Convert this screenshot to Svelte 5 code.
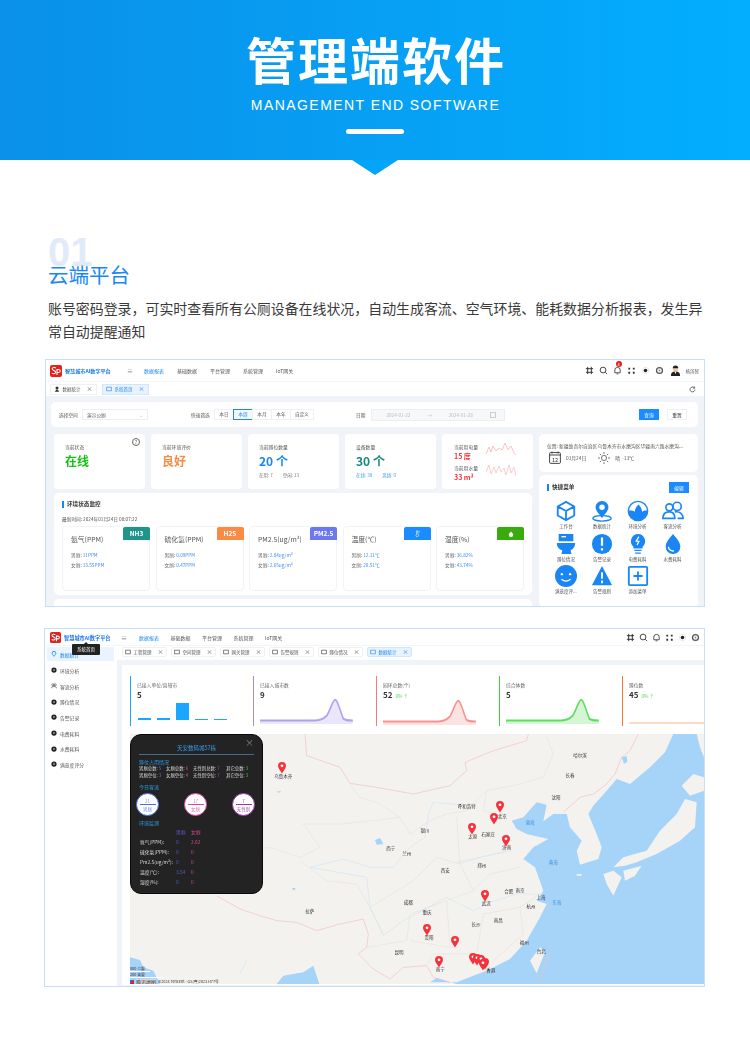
<script>
  const menu = ['数据报表', '基础数据', '平台管理', '系统管理', 'IoT网关'];
  const topCards = [
    { t: '当前状态', v: '在线', c: '#12c312', help: true },
    { t: '当前环境评价', v: '良好', c: '#f98b45' },
    { t: '当前蹲位数量', v: '20 个', c: '#1a86f5', s: ['在用: 7', '空闲: 13'] },
    { t: '设备数量', v: '30 个', c: '#15897c', s: ['在线: 30', '离线: 0'], blue: true }
  ];
  const sensors = [
    { n: '氨气(PPM)', b: 'NH3', c: '#1f9488', m: '11PPM', f: '13.55PPM' },
    { n: '硫化氢(PPM)', b: 'H2S', c: '#f98b45', m: '0.09PPM', f: '0.47PPM' },
    { n: 'PM2.5(ug/m³)', b: 'PM2.5', c: '#6b78f0', m: '2.84ug/m³', f: '2.65ug/m³' },
    { n: '温度(℃)', b: '', c: '#1a8cff', m: '12.11℃', f: '20.51℃', icon: 'temp' },
    { n: '湿度(%)', b: '', c: '#3aab0e', m: '36.82%', f: '43.74%', icon: 'drop' }
  ];
  const quick = ['工作台', '数据统计', '环境分析', '客流分析', '蹲位情况', '告警记录', '电费耗料', '水费耗料', '满意度评...', '告警规则', '添加菜单'];
  const side = ['数据统计', '环境分析', '客流分析', '蹲位情况', '告警记录', '电费耗料', '水费耗料', '满意度评分'];
  const tabs2 = ['工程管理', '空间管理', '网关管理', '告警规则', '蹲位情况', '数据统计'];
  const bell = 'M0 26 H88 C104 26 108 24 114 20 C122 10 124 2 128 2 C132 2 136 14 142 24 C146 26 150 26 158 26';
  const stats = [
    { t: '已接入单位/直辖市', v: '5', c: '#1aa7ff', bars: true },
    { t: '已接入城市数', v: '9', c: '#a08cf0' },
    { t: '园环总数(个)', v: '52', c: '#f77b7b', up: true },
    { t: '综合体数', v: '5', c: '#3cd63c' },
    { t: '蹲位数', v: '45', c: '#f9782c', up: true, last: true }
  ];
  const barHeights = [2, 2, 17, 1, 1];
  const occupy = [
    ['男厕总数:', '5', '#6a6ae0'], ['女厕总数:', '6', '#d050a0'], ['无性别总数:', '7', '#a040c0'], ['其它总数:', '3', '#40c040'],
    ['男厕空位:', '3', '#6a6ae0'], ['女厕空位:', '4', '#d050a0'], ['无性别空位:', '7', '#a040c0'], ['其它空位:', '3', '#40c040']
  ];
  const flow = [
    { n: '21', l: '男厕', c: '#4a6fe0', tc: '#7a8fe8' },
    { n: '17', l: '女厕', c: '#e040a0', tc: '#e070b0' },
    { n: '7', l: '无性别', c: '#a030b0', tc: '#a050b0' }
  ];
  const envRows = [
    ['氨气(PPM):', '0', '2.62'], ['硫化氢(PPM):', '0', '0'], ['Pm2.5(ug/m³):', '0', '0'], ['温度(℃):', '3.54', '0'], ['湿度(%):', '0', '0']
  ];
  const pins = [[65, 98], [721, 215], [702, 250], [635, 280], [738, 315], [675, 482], [501, 584], [584, 618], [537, 680], [638, 670], [652, 672], [662, 675], [674, 684], [668, 688]];
  const cities = [
    ['乌鲁木齐', 70, 127], ['北京', 727, 245], ['太原', 638, 306], ['石家庄', 685, 300], ['济南', 740, 340], ['武汉', 679, 506], ['贵阳', 507, 610], ['南宁', 541, 705], ['香港', 692, 707],
    ['呼和浩特', 620, 217], ['哈尔滨', 960, 62], ['长春', 930, 122], ['沈阳', 888, 188], ['银川', 495, 287], ['西宁', 392, 342], ['兰州', 440, 356], ['西安', 556, 407], ['郑州', 665, 393],
    ['合肥', 746, 472], ['南京', 780, 467], ['上海', 843, 490], ['杭州', 813, 515], ['成都', 445, 505], ['重庆', 501, 535], ['拉萨', 149, 531], ['长沙', 648, 569], ['南昌', 715, 557], ['福州', 793, 625], ['台北', 844, 651], ['昆明', 417, 655]
  ];
  const seas = [['渤海', 810, 265], ['黄海', 880, 385], ['东海', 890, 505]];
</script>

{#snippet logo()}
  <svg class="logo" viewBox="0 0 12 12"><rect width="12" height="12" rx="2" fill="#e3201b" /><path d="M5.8 3.2C4.6 1.8 2 2.3 2.2 4c.2 1.6 3.6 1.5 3.5 3.3C5.6 9 3 9.300 1.900 8" fill="none" stroke="#fff" stroke-width="1.100" /><path d="M7 10V4.500h1.600c2.200 0 2.200 3-.1 3H7" fill="none" stroke="#fff" stroke-width="1.100" /></svg>
{/snippet}

{#snippet tools()}
  <svg viewBox="0 0 10 10"><path d="M3 1v8M7 1v8M1 3h8M1 7h8" stroke="#333" fill="none" stroke-width="1.100" /></svg>
  <svg viewBox="0 0 10 10"><circle cx="4.500" cy="4.500" r="3.200" stroke="#333" fill="none" stroke-width="1" /><path d="M7 7l2 2" stroke="#333" /></svg>
  <svg viewBox="0 0 10 10"><path d="M2 7.500V4.500a3 3 0 0 1 6 0v3zM4 8.700h2" stroke="#444" fill="none" stroke-width="1" /></svg>
  <svg viewBox="0 0 10 10"><path d="M1.500 2h2v2h-2zM6.500 2h2v2h-2zM1.500 6.500h2v2h-2zM6.500 6.500h2v2h-2z" fill="#333" /></svg>
  <svg viewBox="0 0 10 10"><circle cx="5" cy="5" r="2" fill="#222" /><circle cx="5" cy="5" r="3.500" fill="none" stroke="#999" stroke-width=".5" stroke-dasharray="1 1" /></svg>
  <svg viewBox="0 0 10 10"><circle cx="5" cy="5" r="3.300" fill="none" stroke="#555" stroke-width="1.400" /><circle cx="5" cy="5" r="1" fill="#888" /></svg>
{/snippet}

{#snippet spark(color, w, h)}
  <svg class="spark" width={w} height={h} viewBox="0 0 160 30" preserveAspectRatio="none">
    <path d={bell + ' V30 H0 Z'} fill={color} opacity=".22" />
    <path d={bell} fill="none" stroke={color} stroke-width="2.500" opacity=".8" />
  </svg>
{/snippet}

<main class="page">
  <header class="hero">
    <h1>管理端软件</h1>
    <p class="en">MANAGEMENT END SOFTWARE</p>
    <i class="rule"></i>
  </header>

  <section class="intro">
    <div class="heading">
      <span class="num">01</span>
      <h2>云端平台</h2>
    </div>
    <p class="desc">账号密码登录，可实时查看所有公厕设备在线状况，自动生成客流、空气环境、能耗数据分析报表，发生异常自动提醒通知</p>
  </section>

  <!-- Screenshot 1 -->
  <section class="shot shot1">
    <div class="topbar">
      {@render logo()}
      <b class="brand">智慧城市AI数字平台</b>
      <span class="burger">≡</span>
      <nav class="menu">
        {#each menu as m, i}<span class:on={i === 0}>{m}</span>{/each}
      </nav>
      <div class="tools">
        {@render tools()}
        <span class="badge">4</span>
        <svg class="avatar" viewBox="0 0 12 12"><circle cx="6" cy="4" r="3" fill="#f0c8a8" /><path d="M3 3.500a3 3 0 0 1 6 0z" fill="#222" /><path d="M1 12c0-4 2-5 5-5s5 1 5 5z" fill="#222" /><path d="M5 7h2l-1 3z" fill="#fff" /></svg>
        <span class="uname">杨滨智</span>
      </div>
    </div>
    <div class="tabrow">
      <span class="tab"><svg viewBox="0 0 8 8"><circle cx="4" cy="2.500" r="2" fill="#333" /><path d="M1 7.500h6L5 5H3z" fill="#333" /></svg>数据统计<em>×</em></span>
      <span class="tab act"><svg viewBox="0 0 8 8"><rect x="1" y="1.500" width="6" height="5" fill="none" stroke="#1a86f5" stroke-width=".8" /></svg>系统首页<em>×</em></span>
      <svg class="refresh" viewBox="0 0 10 10"><path d="M8.500 5a3.500 3.500 0 1 1-1-2.500M8 .8v2.200H5.800" fill="none" stroke="#333" stroke-width="1" /></svg>
    </div>
    <div class="content">
      <div class="filter">
        <span class="lbl">选择空间</span>
        <span class="select">演示公厕<i>⌄</i></span>
        <span class="lbl l2">快速筛选</span>
        <span class="seg"><span>本日</span><span class="cur">本周</span><span>本月</span><span>本年</span><span class="w">自定义</span></span>
        <span class="lbl l3">日期</span>
        <span class="range"><span>2024-01-22</span><span>→</span><span>2024-01-28</span><i></i></span>
        <span class="btn pri">查询</span>
        <span class="btn">重置</span>
      </div>
      <div class="columns">
        <div class="leftcol">
          <div class="cards">
            {#each topCards as c}
              <div class="card">
                <span class="ct">{c.t}</span>
                <strong style="color:{c.c}">{c.v}</strong>
                {#if c.s}<span class="sub" class:blue={c.blue}><span>{c.s[0]}</span><span>{c.s[1]}</span></span>{/if}
                {#if c.help}<span class="help">?</span>{/if}
              </div>
            {/each}
            <div class="card energy">
              <div class="en-txt">
                <span class="ct">当前用电量</span><b>15 度</b>
                <span class="ct">当前用水量</span><b>33 m³</b>
              </div>
              <div class="waves">
                <svg viewBox="0 0 30 14" width="30" height="14"><path d="M0 12L3 5 5 10 7 4 10 9 13 6 16 8 19 1 22 8 25 4 28 11 30 13" fill="none" stroke="#f9a8a8" stroke-width=".7" /></svg>
                <svg viewBox="0 0 30 14" width="30" height="14"><path d="M0 9L3 2 5 11 8 4 10 10 13 3 15 9 18 5 20 12 23 2 25 10 28 4 30 13" fill="none" stroke="#f9b8b8" stroke-width=".7" /></svg>
              </div>
            </div>
          </div>
          <div class="env">
            <h3>环境状态监控</h3>
            <p class="upd">最新时间: 2024年01月24日 08:07:22</p>
            <div class="sensors">
              {#each sensors as s}
                <div class="sensor">
                  <span class="tag" style="background:{s.c}">
                    {#if s.icon === 'temp'}
                      <svg viewBox="0 0 8 8" width="7" height="7"><path d="M3 1v4a1.500 1.500 0 1 0 1.500 0V1zM5.500 2h1.500" fill="none" stroke="#fff" stroke-width=".7" /></svg>
                    {:else if s.icon === 'drop'}
                      <svg viewBox="0 0 8 8" width="6" height="6"><path d="M4 .5C5.500 2.500 7 3.500 7 5a3 3 0 0 1-6 0c0-1.500 1.500-2.500 3-4.500z" fill="#fff" /></svg>
                    {:else}{s.b}{/if}
                  </span>
                  <div class="sn">{s.n}</div>
                  <div class="sv">男厕: <span>{s.m}</span></div>
                  <div class="sv">女厕: <span>{s.f}</span></div>
                </div>
              {/each}
            </div>
          </div>
          <div class="stub"></div>
        </div>
        <div class="rightcol">
          <div class="info">
            <p>位置: 新疆维吾尔自治区乌鲁木齐市水磨沟区华疆南六路水磨沟...</p>
            <div class="wx">
              <svg width="12" height="13" viewBox="0 0 12 13"><rect x=".6" y="1.600" width="10.800" height="10.800" rx="1" fill="none" stroke="#333" stroke-width=".9" /><path d="M.6 4h10.800M3 .5v2M9 .5v2" stroke="#333" stroke-width=".9" /><text x="6" y="10.500" font-size="5.500" text-anchor="middle" fill="#333">12</text></svg>
              <span>01月24日</span>
              <svg class="sun" width="12" height="12" viewBox="0 0 12 12"><circle cx="6" cy="6" r="2.600" fill="none" stroke="#444" stroke-width=".7" /><path d="M6 0v2M6 10v2M0 6h2M10 6h2M1.800 1.800l1.400 1.400M8.800 8.800l1.400 1.400M1.800 10.200l1.400-1.400M8.800 3.200l1.400-1.400" stroke="#444" stroke-width=".7" /></svg>
              <span>晴&nbsp; -13℃</span>
            </div>
          </div>
          <div class="quick">
            <div class="qh"><h3>快捷菜单</h3><span class="btn pri">编辑</span></div>
            <div class="qgrid">
              {#each quick as q, i}
                <div class="qi">
                  <svg viewBox="0 0 24 24" width="22" height="22">
                    {#if i === 0}
                      <path d="M12 2l9 5v10l-9 5-9-5V7zM3 7l9 5 9-5M12 12v10" fill="none" stroke="#1a86f5" stroke-width="2" />
                    {:else if i === 1}
                      <path d="M12 1a7 7 0 0 1 7 7c0 4-4 7-7 12-3-5-7-8-7-12a7 7 0 0 1 7-7z" fill="#1a86f5" /><circle cx="12" cy="8" r="3" fill="#fff" /><ellipse cx="12" cy="20" rx="10" ry="3" fill="none" stroke="#1a86f5" stroke-width="1.500" />
                    {:else if i === 2}
                      <circle cx="12" cy="12" r="10.500" fill="none" stroke="#1a86f5" stroke-width="1.600" /><path d="M1.500 12a10.500 10.500 0 0 0 21 0c-3-1-5 0-6 1 0-3-2-6-4-8-2 2-4 5-4 8-1-1-4-2-7-1z" fill="#1a86f5" />
                    {:else if i === 3}
                      <circle cx="8" cy="8" r="3.800" fill="none" stroke="#1a86f5" stroke-width="1.800" /><circle cx="16.500" cy="7" r="4.500" fill="none" stroke="#1a86f5" stroke-width="1.800" /><path d="M1 20c0-5 3-7 7-7s6 2 6 7zM14 13c5-1 9 2 9 7h-6" fill="none" stroke="#1a86f5" stroke-width="1.800" />
                    {:else if i === 4}
                      <path d="M4 1h16v8H4zM2 11h20c0 5-3 7-5 8l1 4H7l1-4c-3-1-6-3-6-8z" fill="#1a86f5" /><path d="M7 4h5" stroke="#fff" stroke-width="1.500" />
                    {:else if i === 5}
                      <circle cx="12" cy="12" r="11" fill="#1a86f5" /><path d="M12 5v9M12 16.500v2.500" stroke="#fff" stroke-width="2.400" />
                    {:else if i === 6}
                      <path d="M12 1a8 8 0 0 1 5 14v2H7v-2A8 8 0 0 1 12 1z" fill="#1a86f5" /><path d="M13 4l-3 5h3l-2 4" fill="none" stroke="#fff" stroke-width="1.300" /><path d="M8 19h8M9 22h6" stroke="#1a86f5" stroke-width="1.500" />
                    {:else if i === 7}
                      <path d="M12 1c4 5 8 9 8 14a8 8 0 0 1-16 0c0-5 4-9 8-14z" fill="#1a86f5" /><path d="M7 15c0 3 3 5 6 4.500" fill="none" stroke="#fff" stroke-width="1.500" />
                    {:else if i === 8}
                      <circle cx="12" cy="12" r="12" fill="#1a86f5" /><circle cx="7.500" cy="10" r="1.300" fill="#fff" /><circle cx="16.500" cy="10" r="1.300" fill="#fff" /><path d="M7 15.500c3 2.500 7 2.500 10 0" fill="none" stroke="#fff" stroke-width="1.500" />
                    {:else if i === 9}
                      <path d="M12 1l11 21H1z" fill="#1a86f5" /><path d="M12 8v7M12 17v3" stroke="#fff" stroke-width="2" />
                    {:else}
                      <rect x="2" y="2" width="20" height="20" rx="1" fill="none" stroke="#1a86f5" stroke-width="2" /><path d="M12 7v10M7 12h10" stroke="#1a86f5" stroke-width="2" />
                    {/if}
                  </svg>
                  <span>{q}</span>
                </div>
              {/each}
            </div>
          </div>
        </div>
      </div>
    </div>
  </section>

  <!-- Screenshot 2 -->
  <section class="shot shot2">
    <div class="topbar t2">
      {@render logo()}
      <b class="brand">智慧城市AI数字平台</b>
      <span class="burger">≡</span>
      <nav class="menu">
        {#each menu as m, i}<span class:on={i === 0}>{m}</span>{/each}
      </nav>
      <div class="tools">{@render tools()}</div>
    </div>
    <div class="body2">
      <aside class="side">
        {#each side as s, i}
          <div class="sitem" class:on={i === 0}>
            <svg viewBox="0 0 8 8" width="6" height="6">
              {#if i === 0}<path d="M4 .5a2.500 2.500 0 0 1 2.500 2.500C6.500 4.500 5 5.500 4 7 3 5.500 1.500 4.500 1.500 3A2.500 2.500 0 0 1 4 .5z" fill="none" stroke="#1a86f5" stroke-width="1.100" />
              {:else if i === 2}<circle cx="2.500" cy="2.500" r="1.500" fill="none" stroke="#222" stroke-width=".7" /><circle cx="5.500" cy="2.500" r="1.500" fill="none" stroke="#222" stroke-width=".7" /><path d="M.5 7c0-3 7-3 7 0" fill="none" stroke="#222" stroke-width=".7" />
              {:else}<circle cx="4" cy="4" r="3.500" fill="#222" /><circle cx="4" cy="4" r="1" fill="#fff" />{/if}
            </svg>
            <span>{s}</span>
          </div>
        {/each}
        <span class="tip">系统首页</span>
      </aside>
      <div class="main2">
        <div class="tabs2">
          {#each tabs2 as t, i}
            <span class="tab" class:act={i === 5}>
              <svg viewBox="0 0 8 8"><rect x="1" y="1.500" width="6" height="5" fill="none" stroke={i === 5 ? '#1a86f5' : '#333'} stroke-width=".8" /></svg>{t}<em>×</em>
            </span>
          {/each}
        </div>
        <div class="panel">
          <div class="stats">
            {#each stats as s}
              <div class="stat" class:last={s.last} style="border-left-color:{s.c}">
                <span class="st">{s.t}</span>
                <span class="sval">{s.v}{#if s.up}<small>0% ↑</small>{/if}</span>
                {#if s.bars}
                  <div class="bars">{#each barHeights as h}<i style="height:{h}px"></i>{/each}</div>
                {:else if s.last}
                  <svg class="spark" width="82" height="26" viewBox="0 0 82 26"><path d="M0 24H78C80 24 81 22 82 19" fill="none" stroke={s.c} stroke-width="1" opacity=".55" /></svg>
                {:else}
                  {@render spark(s.c, 94, 26)}
                {/if}
              </div>
            {/each}
          </div>
          <div class="map">
            <svg class="mapsvg" viewBox="-390 0 1722 750" preserveAspectRatio="none">
              <rect x="-390" width="1722" height="750" fill="#f3f2ef" />
              <path fill="#a6d3f8" d="M1240 0L1215 55 1170 100 1110 150 1070 135 1040 170 1000 215 985 240 1010 300 1025 340 1015 375 960 392 950 350 965 320 930 280 920 240 880 240 850 262 860 212 830 205 790 250 755 260 770 285 800 300 865 315 820 340 790 375 825 400 850 470 830 500 860 510 840 550 800 620 750 675 680 710 640 725 590 745 510 745 530 732 590 750 1332 750 1332 0z" />
              <path fill="#a6d3f8" d="M50 750L70 725 130 715 160 695 178 750zM-390 670L-360 678-350 700-320 710-300 750-390 750z" />
              <path fill="#f3f2ef" d="M1310 205L1305 280 1260 320 1190 360 1130 385 1095 395 1060 400 1090 370 1160 350 1200 290 1250 240 1275 195zM1265 155L1300 120 1332 130 1332 170 1290 185zM1030 420L1060 410 1085 430 1060 485 1040 450zM1090 410L1145 395 1125 425 1095 440zM840 640L855 655 830 718 810 680zM950 420h15v5h-15zM1310 0L1320 40 1332 70 1332 0z" />
              <g fill="none" stroke="#f4bccb" stroke-width="2">
                <path d="M135 0L140 65 240 100 270 148 350 160 460 180 570 155 620 110 615 85 700 50 800 20 805 0" />
                <path d="M1135 0L1110 50 1085 70 1065 120 1040 150 1000 180 960 190 910 235" />
                <path d="M-129 486L-60 525 0 545 50 560 110 565 170 590 240 570 310 555 325 600 320 640 295 660 340 705 390 735 430 700 500 695 520 730 570 745" />
                <path d="M870 655L840 745" />
              </g>
              <g fill="none" stroke="#dfdfdb" stroke-width="1.500">
                <path d="M270 150L300 190 350 205 420 250 450 300 510 260 560 240 620 230 680 170 760 155 850 130 880 60 860 10M680 170L670 230 740 250M590 250L600 390 660 370 760 350M420 250L340 260 240 270 130 270 180 340 120 370 30 340 -100 360M120 380L200 440 290 450 330 520 370 600M330 520L460 440 530 370 600 390 640 470 690 420 780 400M640 470L560 500 450 540 440 620 320 640M560 500L570 640 450 620M670 540L650 660 520 660 500 695M670 540L780 520 840 480M780 520L790 600 700 680" />
              </g>
              <g fill="none" stroke="#c4e0f7" stroke-width="1.500">
                <path d="M600 212L520 205 505 240 495 310 450 340 400 400 330 400 250 375 150 400 320 430 330 520 370 605 430 560 560 490 640 530 690 505 770 480 850 480M590 385L660 370 740 350M-60 720L-40 680" />
              </g>
              <path fill="#a6d3f8" d="M345 318L360 312 370 330 350 332zM50 172h14l-8 5zM95 462h12l-5 8zM1085 70l15-4 2 18-10 5z" />
            </svg>
            {#each cities as c}
              <span class="city" style="left:{(c[1] + 390) / 3}px;top:{c[2] / 3}px">{c[0]}</span>
            {/each}
            {#each seas as c}
              <span class="city sea" style="left:{(c[1] + 390) / 3}px;top:{c[2] / 3}px">{c[0]}</span>
            {/each}
            {#each pins as p}
              <svg class="pin" style="left:{(p[0] + 390) / 3 - 4}px;top:{p[1] / 3 - 4.500}px" viewBox="0 0 8 12" width="8" height="12"><path d="M4 0a4 4 0 0 1 4 4C8 6.500 5.500 8.500 4 11.500 2.500 8.500 0 6.500 0 4a4 4 0 0 1 4-4z" fill="#f5323c" /><circle cx="4" cy="3.800" r="1.400" fill="#fff" /></svg>
            {/each}
            <div class="attrib"><div class="scale">800 公里</div><div class="scale s2">200 英里</div><div class="mark"><i></i><b>腾讯地图</b><span>©2024 Tencent - GS(粤)2023 H77号</span></div></div>

            <div class="popup">
              <span class="close">×</span>
              <div class="ptitle">天安数码城57栋</div>
              <div class="phead">蹲位占用情况</div>
              <div class="occ">
                {#each occupy as o}<span>{o[0]} <em style="color:{o[2]}">{o[1]}</em></span>{/each}
              </div>
              <div class="phead h2">今日客流</div>
              <div class="circles">
                {#each flow as f}
                  <div class="circle" style="border-color:{f.c}">
                    <span style="color:{f.tc}">{f.n}</span>
                    <i style="background:{f.c}"></i>
                    <span style="color:{f.tc}">{f.l}</span>
                  </div>
                {/each}
              </div>
              <div class="phead h3">环境监测</div>
              <div class="etable">
                <span></span><span class="mc">男厕</span><span class="fc">女厕</span>
                {#each envRows as r}
                  <span class="el">{r[0]}</span><span class="mc">{r[1]}</span><span class="fc">{r[2]}</span>
                {/each}
              </div>
            </div>
          </div>
        </div>
      </div>
    </div>
  </section>
</main>

<style>
  :global(body) { margin: 0; background: #fff; }
  .page { width: 750px; height: 1043px; overflow: hidden; font-family: "Noto Sans CJK SC", "Liberation Sans", sans-serif; color: #333; }
  h1, h2, h3, p { margin: 0; }
  em { font-style: normal; }
  i { display: block; }

  .hero { position: relative; height: 160px; background: linear-gradient(90deg, #0a90e8, #03aeff); color: #fff; display: flex; flex-direction: column; align-items: center; }
  .hero::after { content: ""; position: absolute; left: 352px; top: 160px; border: 23px solid transparent; border-top: 15px solid #04a4f8; border-bottom: 0; }
  .hero h1 { font-size: 50px; line-height: 60px; margin-top: 28px; font-weight: 700; letter-spacing: 2px; margin-right: -2px; }
  .en { font-family: "Liberation Sans", sans-serif; font-size: 14px; line-height: 16px; letter-spacing: 1.44px; margin-top: 9px; margin-right: -1px; }
  .rule { width: 58px; height: 5px; border-radius: 3px; background: #fff; margin-top: 16px; }

  .intro { padding: 0 47px 0 48px; }
  .heading { display: grid; margin-top: 74px; height: 50px; width: 100px; }
  .num { grid-area: 1 / 1; font-family: "Liberation Sans", sans-serif; font-size: 40px; line-height: 40px; font-weight: 700; color: #e2eafa; margin-top: -2px; }
  h2 { grid-area: 1 / 1; font-size: 20.500px; line-height: 24px; font-weight: 400; color: #1a86f5; margin-top: 28px; white-space: nowrap; }
  .desc { font-size: 13.930px; line-height: 23px; margin-top: 13px; color: #3a3a3a; }

  .shot { box-sizing: border-box; border: 1px solid #c9dff6; overflow: hidden; background: #f0f3f8; filter: blur(.35px); }
  .shot1 { width: 660px; height: 248px; margin: 16px 0 0 45px; }
  .shot2 { width: 661px; height: 359px; margin: 21px 0 0 44px; }

  .topbar { height: 21px; background: #fff; display: flex; align-items: center; padding: 0 4px; }
  .logo { width: 12px; height: 12px; flex: none; }
  .brand { font-size: 5.100px; color: #1a78e8; margin-left: 3px; white-space: nowrap; width: 51px; }
  .burger { font-size: 6px; color: #777; margin-left: 11px; width: 6px; }
  .menu { display: flex; gap: 13px; margin-left: 11px; font-size: 5px; color: #555; white-space: nowrap; }
  .menu span { width: 20px; }
  .menu .on { color: #1a86f5; }
  .tools { margin-left: auto; display: flex; align-items: center; gap: 5px; position: relative; margin-right: 1px; }
  .tools svg { width: 9px; height: 9px; flex: none; }
  .tools .avatar { width: 11px; height: 11px; margin-left: 1px; }
  .badge { position: absolute; left: 31px; top: -4px; width: 6px; height: 6px; border-radius: 50%; background: #e3201b; color: #fff; font-size: 4px; line-height: 6px; text-align: center; }
  .uname { font-size: 4.500px; color: #666; margin-left: 0; white-space: nowrap; }

  .tabrow { box-sizing: border-box; height: 15px; background: #fff; display: flex; align-items: center; gap: 5px; padding-left: 4px; border-top: 1px solid #f7f7f7; }
  .tab { box-sizing: border-box; height: 11px; width: 47px; flex: none; display: flex; align-items: center; justify-content: center; gap: 2px; border: 1px solid #eef0f3; font-size: 4.500px; color: #555; white-space: nowrap; background: #fff; }
  .tab svg { width: 6px; height: 6px; }
  .tab em { margin-left: 4px; font-size: 6px; line-height: 6px; }
  .tab.act { background: #e8f3fe; border-color: #cfe6fc; color: #1a86f5; }
  .refresh { width: 7px; height: 7px; margin-left: auto; margin-right: 8px; }

  .content { padding: 6px 6px 0 5px; }
  .filter { height: 25px; background: #fff; border-radius: 5px; display: flex; align-items: center; padding-left: 8px; font-size: 4.700px; color: #555; white-space: nowrap; margin-right: 0; }
  .lbl { width: 20px; }
  .select { box-sizing: border-box; width: 66px; height: 11px; margin-left: 3px; border: 1px solid #eceef2; display: flex; align-items: center; justify-content: space-between; padding: 0 4px; }
  .select i { font-style: normal; color: #bbb; }
  .l2 { margin-left: 43px; }
  .seg { display: flex; margin-left: 4px; }
  .seg span { box-sizing: border-box; width: 20px; height: 11px; border: 1px solid #eef0f3; margin-left: -1px; text-align: center; line-height: 9px; }
  .seg .cur { border-color: #1a86f5; color: #1a86f5; background: #f3f9ff; }
  .seg .w { width: 24px; }
  .l3 { margin-left: 42px; width: 10px; }
  .range { box-sizing: border-box; width: 134px; height: 12px; margin-left: 5px; background: #f7f8fa; border: 1px solid #eceef2; color: #bbb; display: flex; align-items: center; justify-content: space-around; padding-left: 6px; }
  .range i { width: 4px; height: 4px; border: 1px solid #ccc; }
  .btn { box-sizing: border-box; width: 20px; height: 11px; display: block; text-align: center; line-height: 10px; font-size: 4.700px; border: 1px solid #eef0f3; background: #fff; color: #333; margin-left: 8px; }
  .filter .pri { margin-left: 134px; }
  .btn.pri { background: #1a8cff; border-color: #1a8cff; color: #fff; }

  .columns { display: flex; gap: 7px; margin-top: 7px; }
  .leftcol { width: 478px; margin-left: 3px; flex: none; }
  .rightcol { width: 159px; flex: none; }
  .cards { display: grid; grid-template-columns: repeat(5, 91px); column-gap: 6px; height: 55px; }
  .card { position: relative; background: #fff; border-radius: 4px; padding: 9px 0 0 11px; display: flex; flex-direction: column; }
  .ct { font-size: 4.800px; line-height: 7px; color: #555; white-space: nowrap; }
  .card strong { font-size: 12px; line-height: 16px; margin-top: 3px; font-weight: 700; }
  .sub { font-size: 4.500px; color: #777; line-height: 7px; margin-top: 3px; display: flex; gap: 10px; }
  .sub.blue { color: #4a9cf5; }
  .help { position: absolute; right: 5px; top: 4px; box-sizing: border-box; width: 8px; height: 8px; border: 1px solid #666; border-radius: 50%; font-size: 5px; line-height: 6px; text-align: center; color: #555; }
  .energy { flex-direction: row; padding: 9px 0 0 12px; }
  .en-txt { display: flex; flex-direction: column; width: 32px; }
  .en-txt b { font-size: 7px; line-height: 10px; color: #f5323c; margin: 1px 0 3px; white-space: nowrap; }
  .waves { display: flex; flex-direction: column; gap: 7px; margin-top: -1px; }

  .env { height: 102px; margin-top: 4px; background: #fff; border-radius: 5px; padding: 8px 8px 0; box-sizing: border-box; }
  h3 { font-size: 5.600px; line-height: 7px; font-weight: 700; color: #333; border-left: 2px solid #1a86f5; padding-left: 3px; }
  .upd { font-size: 4.700px; line-height: 7px; color: #555; margin-top: 8px; }
  .sensors { display: grid; grid-template-columns: repeat(5, 88px); column-gap: 5.500px; margin-top: 3px; }
  .sensor { position: relative; box-sizing: border-box; height: 65px; border: 1px solid #f1f3f6; border-radius: 4px; padding: 7px 0 0 8px; }
  .tag { position: absolute; right: -1px; top: 0; width: 27px; height: 13px; border-radius: 2px 2px 0 0; color: #fff; font-size: 6.500px; line-height: 13px; font-weight: 700; display: flex; align-items: center; justify-content: center; }
  .sn { font-size: 6.800px; line-height: 10px; color: #555; }
  .sv { font-size: 4.700px; line-height: 9.500px; color: #666; white-space: nowrap; }
  .sn + .sv { margin-top: 7px; }
  .sv span { color: #3c8df0; }
  .stub { height: 12px; margin-top: 4px; background: #fff; border-radius: 5px; }

  .info { height: 38px; background: #fff; border-radius: 5px; box-sizing: border-box; padding: 8px 0 0 8px; font-size: 4.800px; color: #555; }
  .info p { white-space: nowrap; overflow: hidden; line-height: 7px; width: 142px; }
  .wx { display: flex; align-items: center; margin-top: 2px; margin-left: 2px; gap: 5px; }
  .wx .sun { margin-left: 7px; }
  .quick { margin-top: 3px; height: 132px; background: #fff; border-radius: 5px; padding: 6px 9px 0 8px; box-sizing: border-box; }
  .qh { display: flex; align-items: center; justify-content: space-between; height: 12px; }
  .qh .btn { margin: 0; }
  .qgrid { display: grid; grid-template-columns: 36px 36px 35px 35px; margin-top: 7px; margin-left: 1px; }
  .qi { height: 32.500px; display: flex; flex-direction: column; align-items: center; font-size: 4.500px; color: #555; white-space: nowrap; line-height: 7px; }
  .qi svg { height: 22px; flex: none; margin-bottom: 1px; }

  .t2 { height: 16px; padding-left: 5px; }
  .t2 .logo { width: 11px; height: 11px; }
  .t2 .brand { width: 48px; font-size: 5.200px; }
  .t2 .burger { margin-left: 9px; }
  .t2 .menu { gap: 11.500px; margin-left: 12px; }
  .t2 .tools { gap: 4px; margin-right: 0; }
  .body2 { display: flex; height: 342px; border-top: 1px solid #f4f5f7; }
  .side { position: relative; width: 72px; flex: none; background: #fff; padding: 1px 3px 0 2px; box-sizing: border-box; }
  .sitem { height: 15.700px; display: flex; align-items: center; gap: 3px; padding-left: 4px; font-size: 4.800px; color: #555; box-sizing: border-box; white-space: nowrap; }
  .sitem.on { background: #eaf4fe; color: #1a86f5; height: 14px; margin-bottom: 1.500px; }
  .tip { position: absolute; left: 27px; top: -2px; width: 28px; height: 11px; background: #222; color: #fff; font-size: 4.500px; line-height: 11px; text-align: center; border-radius: 1px; }
  .tip::before { content: ""; position: absolute; left: 12px; top: -2px; border: 2px solid transparent; border-top: 0; border-bottom: 2px solid #222; }
  .main2 { flex: 1; min-width: 0; padding-left: 5px; display: flex; flex-direction: column; }
  .tabs2 { display: flex; gap: 4px; height: 14px; align-items: flex-start; padding-top: 1px; box-sizing: border-box; overflow: hidden; background: #fff; margin-left: -5px; padding-left: 5px; flex: none; }
  .tabs2 .tab { width: 45px; height: 10px; border-radius: 2px; }
  .panel { background: #fff; height: 320px; padding: 11px 0 0 8px; box-sizing: border-box; margin-top: 5px; position: relative; flex: none; }
  .stats { display: flex; height: 50px; }
  .stat { box-sizing: border-box; width: 123px; flex: none; height: 50px; border-left: 1.500px solid; padding: 5px 0 0 6px; display: flex; flex-direction: column; }
  .stat.last { width: 82px; padding-right: 0; }
  .st { font-size: 4.800px; line-height: 7px; color: #666; white-space: nowrap; }
  .sval { font-size: 8px; line-height: 10px; font-weight: 700; color: #333; margin-top: 2px; }
  .sval small { font-size: 4.800px; font-weight: 400; color: #5ad85a; margin-left: 3px; }
  .bars { display: flex; gap: 6px; align-items: flex-end; height: 20px; margin-left: 1px; }
  .bars i { width: 13px; background: #1aa7ff; }
  .spark { display: block; margin-top: -2px; flex: none; }

  .map { position: relative; width: 574px; height: 250px; margin-top: 8px; overflow: hidden; }
  .mapsvg { display: block; width: 574px; height: 250px; }
  .city { position: absolute; transform: translate(-50%, -50%); font-size: 4.500px; line-height: 5px; color: #333; white-space: nowrap; }
  .sea { color: #3d8fd8; }
  .pin { position: absolute; }
  .attrib { position: absolute; left: 0; bottom: 0; font-size: 3.800px; line-height: 5px; color: #333; }
  .scale { width: 20px; border-bottom: 1px solid #fff; }
  .scale.s2 { width: 34px; }
  .mark { display: flex; align-items: center; gap: 2px; margin-top: 1px; white-space: nowrap; }
  .mark i { width: 4px; height: 4px; background: linear-gradient(135deg, #2a6cf0 50%, #e3201b 50%); }
  .mark b { font-size: 5px; font-weight: 400; background: #ddd; }

  .popup { position: absolute; left: 0; top: 0; box-sizing: border-box; width: 133px; height: 160px; background: #232323; border: 1px solid #0a0a0a; border-radius: 11px; padding: 9px 8px 0; color: #ddd; font-size: 4.800px; }
  .close { position: absolute; right: 8px; top: 2px; font-size: 9px; line-height: 12px; color: #888; }
  .ptitle { text-align: center; font-size: 5.500px; line-height: 8px; color: #3aa0ea; border-bottom: 1px solid #3f6d8a; padding-bottom: 2px; }
  .phead { font-size: 5px; line-height: 7px; color: #2e9be0; margin-top: 3px; }
  .occ { display: grid; grid-template-columns: 27px 27px 33px 22px; line-height: 7px; white-space: nowrap; font-size: 4.400px; margin-top: 0; }
  .phead.h2 { margin-top: 4px; }
  .circles { display: flex; justify-content: space-between; margin: 3px -1px 0 -3px; }
  .circle { box-sizing: border-box; width: 23px; height: 23px; border: 1px solid; border-radius: 50%; background: #fff; display: flex; flex-direction: column; align-items: center; justify-content: center; font-size: 4.500px; line-height: 6px; }
  .circle i { width: 16px; height: 1px; margin: 0 0 1px; }
  .phead.h3 { margin-top: 3px; }
  .etable { display: grid; grid-template-columns: 37px 15px 20px; grid-auto-rows: 9.900px; align-items: center; margin-top: 1px; white-space: nowrap; font-size: 4.800px; }
  .el { color: #ddd; padding-left: 1px; }
  .mc { color: #5c5cd0; }
  .fc { color: #d04a9c; }
</style>
